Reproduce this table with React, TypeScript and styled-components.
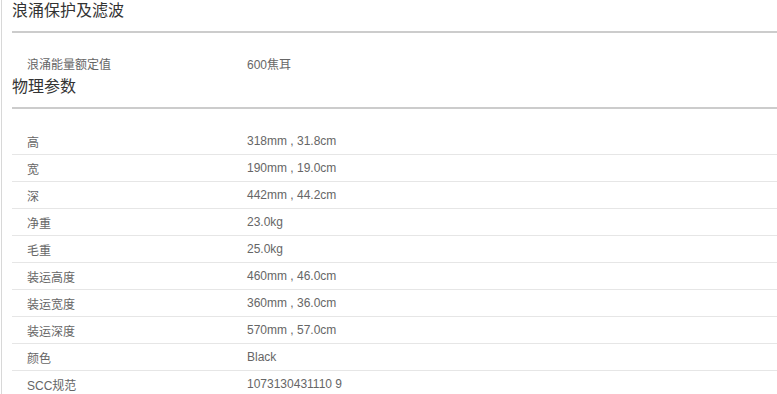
import React from "react";
import styled, { createGlobalStyle } from "styled-components";

const Global = createGlobalStyle`
  html, body { margin: 0; padding: 0; background: #fff; }
  body { font-family: "Liberation Sans", "Noto Sans CJK SC", sans-serif; }
`;

const Page = styled.div`
  margin-left: 1px;
  border-left: 1px solid #d8d8d8;
  padding-left: 10px;
  min-height: 394px;
  overflow: hidden;
`;

const Heading = styled.h3`
  margin: 0;
  font-size: 16px;
  font-weight: normal;
  line-height: 21px;
  color: #333;
  padding-bottom: 10px;
  border-bottom: 2px solid #cccccc;
`;

const Table = styled.div<{ $gap: number }>`
  padding-top: ${(p) => p.$gap}px;
`;

const Row = styled.div<{ $last?: boolean }>`
  display: grid;
  grid-template-columns: 235px 1fr;
  height: 26px;
  align-items: center;
  font-size: 12px;
  color: #666;
  border-bottom: ${(p) => (p.$last ? "none" : "1px solid #e6e6e6")};
`;

const Label = styled.span`
  padding-left: 15px;
`;

const Value = styled.span``;

type Item = [string, string];

const sections: { title: string; gap: number; items: Item[] }[] = [
  { title: "浪涌保护及滤波", gap: 17, items: [["浪涌能量额定值", "600焦耳"]] },
  {
    title: "物理参数",
    gap: 19,
    items: [
      ["高", "318mm , 31.8cm"],
      ["宽", "190mm , 19.0cm"],
      ["深", "442mm , 44.2cm"],
      ["净重", "23.0kg"],
      ["毛重", "25.0kg"],
      ["装运高度", "460mm , 46.0cm"],
      ["装运宽度", "360mm , 36.0cm"],
      ["装运深度", "570mm , 57.0cm"],
      ["颜色", "Black"],
      ["SCC规范", "1073130431110 9"],
    ],
  },
];

export default function App() {
  return (
    <>
      <Global />
      <Page>
        {sections.map((s) => (
          <section key={s.title}>
            <Heading>{s.title}</Heading>
            <Table $gap={s.gap}>
              {s.items.map(([k, v], i) => (
                <Row key={k} $last={i === s.items.length - 1}>
                  <Label>{k}</Label>
                  <Value>{v}</Value>
                </Row>
              ))}
            </Table>
          </section>
        ))}
      </Page>
    </>
  );
}
